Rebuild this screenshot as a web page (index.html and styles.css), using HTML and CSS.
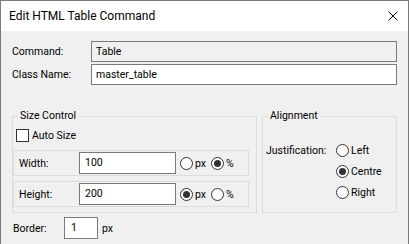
FILE: index.html
```html
<!DOCTYPE html>
<html lang="en">
<head>
    <meta charset="UTF-8">
    <title>Edit HTML Table Command</title>
    <link rel="stylesheet" href="styles.css">
</head>
<body>
    <div class="window">
        <div class="titlebar">
            <span class="title">Edit HTML Table Command</span>
            <svg class="close" width="10" height="10" viewBox="0 0 10 10">
                <path d="M0.5 0.5L9.5 9.5M9.5 0.5L0.5 9.5" stroke="#000" stroke-width="1"/>
            </svg>
        </div>

        <div class="content">
            <div class="field">
                <span class="field-label">Command:</span>
                <div class="textbox disabled">Table</div>
            </div>
            <div class="field">
                <span class="field-label">Class Name:</span>
                <div class="textbox">master_table</div>
            </div>

            <div class="groups">
                <fieldset class="group size-group">
                    <legend>Size Control</legend>
                    <div class="check"><span class="checkbox"></span>Auto Size</div>

                    <div class="size-row">
                        <span class="row-label">Width:</span>
                        <div class="textbox size-box">100</div>
                        <span class="radio"><span class="radio-dot"></span>px</span>
                        <span class="radio"><span class="radio-dot checked"></span>%</span>
                    </div>
                    <div class="size-row">
                        <span class="row-label">Height:</span>
                        <div class="textbox size-box">200</div>
                        <span class="radio"><span class="radio-dot checked"></span>px</span>
                        <span class="radio"><span class="radio-dot"></span>%</span>
                    </div>
                </fieldset>

                <fieldset class="group align-group">
                    <legend>Alignment</legend>
                    <div class="justify">
                        <span class="justify-label">Justification:</span>
                        <div class="radio-list">
                            <span class="radio"><span class="radio-dot"></span>Left</span>
                            <span class="radio"><span class="radio-dot checked"></span>Centre</span>
                            <span class="radio"><span class="radio-dot"></span>Right</span>
                        </div>
                    </div>
                </fieldset>
            </div>

            <div class="border-field">
                <span class="border-label">Border:</span>
                <div class="textbox border-box">1</div>
                <span>px</span>
            </div>
        </div>
    </div>
</body>
</html>
```

FILE: styles.css
```css
:root {
    --color-face: #f0f0f0;
    --color-frame: #7a7a7a;
    --color-etch: #dcdcdc;
    --color-text: #000;
}

body {
    margin: 0;
    font-family: 'Roboto', 'Noto Sans', sans-serif;
    font-size: 10.5px;
    color: var(--color-text);
}

.window {
    width: 409px;
    height: 244px;
    box-sizing: border-box;
    border: 1px solid var(--color-frame);
    border-bottom: none;
    background: var(--color-face);
    display: flex;
    flex-direction: column;
}

.titlebar {
    height: 30px;
    flex-shrink: 0;
    background: #fff;
    display: flex;
    align-items: center;
    justify-content: space-between;
    padding: 0 10px 0 8px;
}

.title {
    font-size: 12px;
}

.content {
    padding: 10px 11px 0 11px;
}

.field {
    display: flex;
    align-items: center;
    margin-bottom: 2px;
}

.field-label {
    width: 79px;
}

.textbox {
    box-sizing: border-box;
    height: 21px;
    line-height: 19px;
    border: 1px solid var(--color-frame);
    background: #fff;
    padding: 0 4px;
}

.field .textbox {
    flex: 1;
}

.textbox.disabled {
    background: var(--color-face);
}

/* group boxes */
.groups {
    display: flex;
    gap: 5px;
    margin-top: 23px;
}

.group {
    margin: 0;
    padding: 0;
    border: 1px solid var(--color-etch);
    min-width: 0;
}

.group legend {
    margin-left: 5px;
    padding: 0 2px;
    line-height: 16px;
}

.size-group {
    width: 245px;
    box-sizing: border-box;
    padding-bottom: 5px;
}

.align-group {
    flex: 1;
}

.check {
    display: flex;
    align-items: center;
    gap: 3px;
    height: 16px;
    margin: 3px 0 0 3px;
}

.checkbox {
    width: 13px;
    height: 13px;
    box-sizing: border-box;
    border: 1px solid #333;
    background: #fff;
}

.size-row {
    display: flex;
    align-items: center;
    height: 26px;
    box-sizing: border-box;
    border: 1px solid var(--color-etch);
    margin: 7px 7px 0 0;
    padding-left: 5px;
}

.size-row + .size-row {
    margin-top: 5px;
}

.row-label {
    width: 60px;
}

.size-box {
    width: 97px;
    height: 22px;
    padding: 0 5px;
}

.size-box + .radio {
    margin-left: 4px;
}

.radio {
    display: flex;
    align-items: center;
    gap: 2px;
    margin-right: 5px;
}

.radio-dot {
    width: 13px;
    height: 13px;
    box-sizing: border-box;
    border: 1px solid #333;
    border-radius: 50%;
    background: #fff;
    display: flex;
    align-items: center;
    justify-content: center;
}

.radio-dot.checked::after {
    content: '';
    width: 7px;
    height: 7px;
    border-radius: 50%;
    background: #333;
}

.justify {
    display: flex;
    margin: 16px 0 0 3px;
}

.justify-label {
    width: 70px;
    line-height: 21px;
}

.radio-list {
    display: flex;
    flex-direction: column;
}

.radio-list .radio {
    height: 21px;
}

.border-field {
    display: flex;
    align-items: center;
    margin-top: 4px;
}

.border-label {
    width: 51px;
    padding-left: 1px;
}

.border-box {
    width: 34px;
    height: 22px;
    padding: 0 6px;
    margin-right: 4px;
}
```
